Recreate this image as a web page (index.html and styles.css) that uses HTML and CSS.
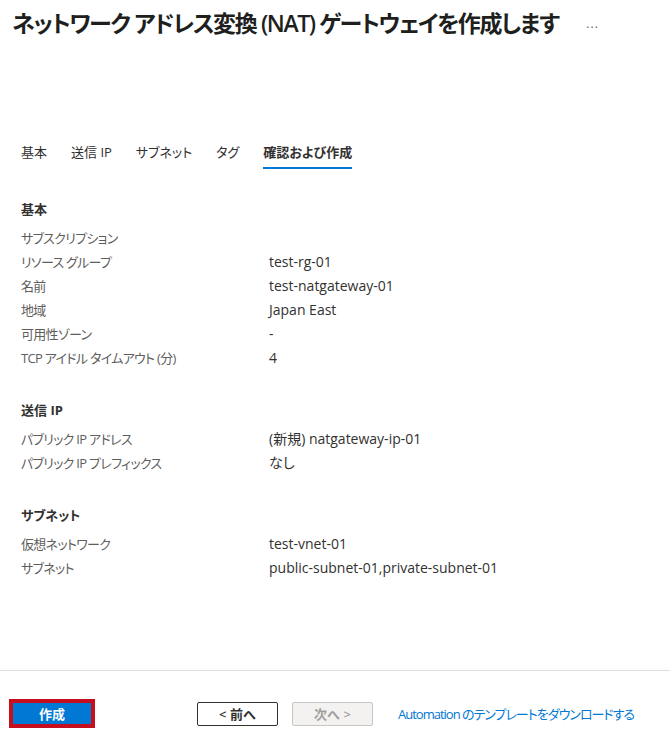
FILE: index.html
```html
<!DOCTYPE html>
<html lang="ja">
<head>
<meta charset="UTF-8">
<meta name="viewport" content="width=device-width, initial-scale=1.0">
<title>ネットワーク アドレス変換 (NAT) ゲートウェイを作成します</title>
<link rel="stylesheet" href="styles.css">
</head>
<body>

<div class="header">
  <h1 class="title">ネットワーク アドレス変換 (NAT) ゲートウェイを作成します</h1>
  <span class="more">...</span>
</div>

<div class="main">
  <!-- wizard tabs -->
  <div class="tabs">
    <span class="tab">基本</span>
    <span class="tab">送信 IP</span>
    <span class="tab">サブネット</span>
    <span class="tab">タグ</span>
    <span class="tab active">確認および作成</span>
  </div>

  <div class="section">
    <div class="section-title">基本</div>
    <div class="row"><span class="label">サブスクリプション</span><span class="value"></span></div>
    <div class="row"><span class="label">リソース グループ</span><span class="value">test-rg-01</span></div>
    <div class="row"><span class="label">名前</span><span class="value">test-natgateway-01</span></div>
    <div class="row"><span class="label">地域</span><span class="value">Japan East</span></div>
    <div class="row"><span class="label">可用性ゾーン</span><span class="value">-</span></div>
    <div class="row"><span class="label">TCP アイドル タイムアウト (分)</span><span class="value">4</span></div>
  </div>

  <div class="section">
    <div class="section-title">送信 IP</div>
    <div class="row"><span class="label">パブリック IP アドレス</span><span class="value">(新規) natgateway-ip-01</span></div>
    <div class="row"><span class="label">パブリック IP プレフィックス</span><span class="value">なし</span></div>
  </div>

  <div class="section">
    <div class="section-title">サブネット</div>
    <div class="row"><span class="label">仮想ネットワーク</span><span class="value">test-vnet-01</span></div>
    <div class="row"><span class="label">サブネット</span><span class="value">public-subnet-01,private-subnet-01</span></div>
  </div>
</div>

<div class="footer">
  <button class="btn-create">作成</button>
  <button class="btn">&lt; 前へ</button>
  <button class="btn disabled">次へ &gt;</button>
  <a class="link" href="#">Automation のテンプレートをダウンロードする</a>
</div>

</body>
</html>
```

FILE: styles.css
```css
html, body {
  height: 100%;
  margin: 0;
}

body {
  display: flex;
  flex-direction: column;
  font-family: 'Open Sans', 'Noto Sans CJK JP', sans-serif;
  font-feature-settings: "palt";
  font-size: 13px;
  color: #323130;
  background: #ffffff;
}

.header {
  display: flex;
  align-items: center;
  padding: 8px 12px 0;
}

.title {
  margin: 0;
  font-size: 23px;
  line-height: 30px;
  font-weight: 600;
  letter-spacing: -1.4px;
  white-space: nowrap;
  color: #201f1e;
}

.more {
  margin-left: 28px;
  font-size: 12px;
  color: #605e5c;
  letter-spacing: 1px;
}

.main {
  flex: 1;
}

.tabs {
  display: flex;
  gap: 24px;
  margin-top: 104px;
  padding-left: 21px;
}

.tab {
  line-height: 20px;
  padding-bottom: 5px;
  border-bottom: 2px solid transparent;
  font-size: 13px;
}

.tab.active {
  font-weight: 600;
  border-bottom-color: #0078d4;
}

.section {
  margin-top: 30px;
  padding-left: 21px;
}

.section-title {
  font-weight: 700;
  line-height: 20px;
  margin-bottom: 7px;
}

.row {
  display: grid;
  grid-template-columns: 248px 1fr;
  line-height: 24px;
}

.label {
  color: #605e5c;
  letter-spacing: -0.7px;
}

.value {
  color: #323130;
  font-size: 14px;
}

.footer {
  display: flex;
  align-items: center;
  border-top: 1px solid #e1dfdd;
  padding: 28px 0 8px 9px;
}

.btn-create {
  width: 86px;
  height: 29px;
  border: 4px solid #c50f1f;
  background: #0078d4;
  color: #ffffff;
  font-family: inherit;
  font-size: 13px;
  font-weight: 700;
  padding: 0;
  margin-right: 102px;
}

.btn {
  width: 81px;
  height: 24px;
  border: 1px solid #323130;
  border-radius: 2px;
  background: #ffffff;
  color: #323130;
  font-family: inherit;
  font-size: 13px;
  font-weight: 600;
  padding: 0;
  margin-right: 14px;
}

.btn.disabled {
  background: #f3f2f1;
  border-color: #c8c6c4;
  color: #a19f9d;
  margin-right: 25px;
}

.link {
  color: #0078d4;
  text-decoration: none;
  letter-spacing: -1px;
}
```
